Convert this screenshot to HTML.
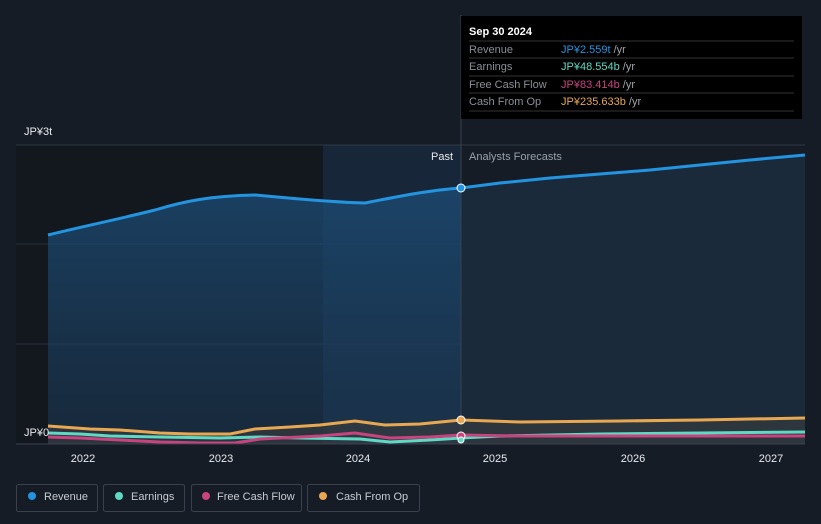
<!DOCTYPE html>
<html><head><meta charset="utf-8"><style>
body{margin:0;background:#161c26;font-family:"Liberation Sans",sans-serif;}
svg{display:block}
</style></head><body>
<svg width="821" height="524" xmlns="http://www.w3.org/2000/svg" font-family="Liberation Sans, sans-serif">
<defs>
<linearGradient id="rv" x1="0" y1="0" x2="0" y2="1"><stop offset="0" stop-color="#1c4f7a" stop-opacity="0.8"/><stop offset="1" stop-color="#1c3a58" stop-opacity="0.5"/></linearGradient>
</defs>
<rect width="821" height="524" fill="#161c26"/>
<rect x="16" y="145" width="307" height="299" fill="#13171e"/>
<rect x="323" y="145" width="138" height="299" fill="#172638"/>
<line x1="16" y1="145" x2="805" y2="145" stroke="#2f3744"/>
<line x1="16" y1="244" x2="805" y2="244" stroke="#2a313c"/>
<line x1="16" y1="344" x2="805" y2="344" stroke="#2a313c"/>
<path d="M48,235 C80,227 115,220 155,210 C185,201 210,196 255,195 C290,198 325,202 365,203 C395,197 430,190 461,188 L500,183 L550,178 L600,174 L650,170 L700,165 L750,160 L805,155 L805,444 L48,444Z" fill="url(#rv)"/>
<path d="M461,188 L500,183 L550,178 L600,174 L650,170 L700,165 L750,160 L805,155 L805,444 L461,444Z" fill="#1b2a3b"/>
<path d="M48,235 C80,227 115,220 155,210 C185,201 210,196 255,195 C290,198 325,202 365,203 C395,197 430,190 461,188 L500,183 L550,178 L600,174 L650,170 L700,165 L750,160 L805,155" fill="none" stroke="#2394e0" stroke-width="3"/>
<line x1="461" y1="15" x2="461" y2="444" stroke="#3a4250"/>
<path d="M48,426 L90,429 L120,430 L160,433 L190,434 L230,434 L255,429 L290,427 L320,425 L355,421 L385,425 L420,424 L461,420 L520,422 L620,421 L700,420 L805,418 L805,444 L48,444Z" fill="#3a3e40" opacity="0.6"/>
<path d="M48,433 L80,434 L110,436 L160,437 L220,438 L260,437 L300,438 L360,439 L390,442 L430,440 L461,438 L500,436 L600,434 L700,433 L805,432" fill="none" stroke="#5fd8c4" stroke-width="3"/>
<path d="M48,437 L80,438 L120,440 L160,442 L200,443 L235,443 L260,439 L320,436 L355,433 L390,438 L430,437 L461,435 L520,436 L805,436" fill="none" stroke="#c8447e" stroke-width="3"/>
<path d="M48,426 L90,429 L120,430 L160,433 L190,434 L230,434 L255,429 L290,427 L320,425 L355,421 L385,425 L420,424 L461,420 L520,422 L620,421 L700,420 L805,418" fill="none" stroke="#e8a851" stroke-width="3"/>
<line x1="16" y1="444" x2="805" y2="444" stroke="#3a4250"/>
<circle cx="461" cy="188" r="4" fill="#2394e0" stroke="#fff" stroke-width="1"/>
<circle cx="461" cy="420" r="4" fill="#e8a851" stroke="#fff" stroke-width="1"/>
<circle cx="461" cy="436" r="4" fill="#c8447e" stroke="#fff" stroke-width="1"/>
<circle cx="461" cy="440" r="3" fill="#5fd8c4" stroke="#fff" stroke-width="1"/>
<text x="24" y="135" fill="#e8eaed" font-size="11">JP¥3t</text>
<text x="24" y="436" fill="#e8eaed" font-size="11">JP¥0</text>
<text x="453" y="160" fill="#e8eaed" font-size="11" text-anchor="end">Past</text>
<text x="469" y="160" fill="#9aa0a8" font-size="11">Analysts Forecasts</text>
<g fill="#e8eaed" font-size="11" text-anchor="middle">
<text x="83" y="462">2022</text><text x="221" y="462">2023</text><text x="358" y="462">2024</text><text x="495" y="462">2025</text><text x="633" y="462">2026</text><text x="771" y="462">2027</text>
</g>
<rect x="461" y="16" width="341" height="103" fill="#000"/>
<text x="469" y="35" fill="#fff" font-size="11" font-weight="bold">Sep 30 2024</text>
<g stroke="#333" ><line x1="469" y1="41" x2="794" y2="41"/><line x1="469" y1="58" x2="794" y2="58"/><line x1="469" y1="76" x2="794" y2="76"/><line x1="469" y1="93" x2="794" y2="93"/><line x1="469" y1="111" x2="794" y2="111"/></g>
<g font-size="11">
<text x="469" y="53" fill="#8a8f96">Revenue</text><text x="561" y="53" fill="#2394e0">JP¥2.559t <tspan fill="#a0a4aa">/yr</tspan></text>
<text x="469" y="70" fill="#8a8f96">Earnings</text><text x="561" y="70" fill="#5fd8c4">JP¥48.554b <tspan fill="#a0a4aa">/yr</tspan></text>
<text x="469" y="88" fill="#8a8f96">Free Cash Flow</text><text x="561" y="88" fill="#c8447e">JP¥83.414b <tspan fill="#a0a4aa">/yr</tspan></text>
<text x="469" y="105" fill="#8a8f96">Cash From Op</text><text x="561" y="105" fill="#e8a851">JP¥235.633b <tspan fill="#a0a4aa">/yr</tspan></text>
</g>
<g fill="none" stroke="#3a414c"><rect x="16.5" y="484.5" width="81" height="27" rx="2"/><rect x="103.5" y="484.5" width="81" height="27" rx="2"/><rect x="191.5" y="484.5" width="110" height="27" rx="2"/><rect x="307.5" y="484.5" width="112" height="27" rx="2"/></g>
<circle cx="32" cy="496" r="4" fill="#2394e0"/><circle cx="119" cy="496" r="4" fill="#5fd8c4"/><circle cx="206" cy="496" r="4" fill="#c8447e"/><circle cx="323" cy="496" r="4" fill="#e8a851"/>
<g fill="#c8ccd2" font-size="11"><text x="44" y="500">Revenue</text><text x="131" y="500">Earnings</text><text x="217" y="500">Free Cash Flow</text><text x="336" y="500">Cash From Op</text></g>
</svg>
</body></html>
